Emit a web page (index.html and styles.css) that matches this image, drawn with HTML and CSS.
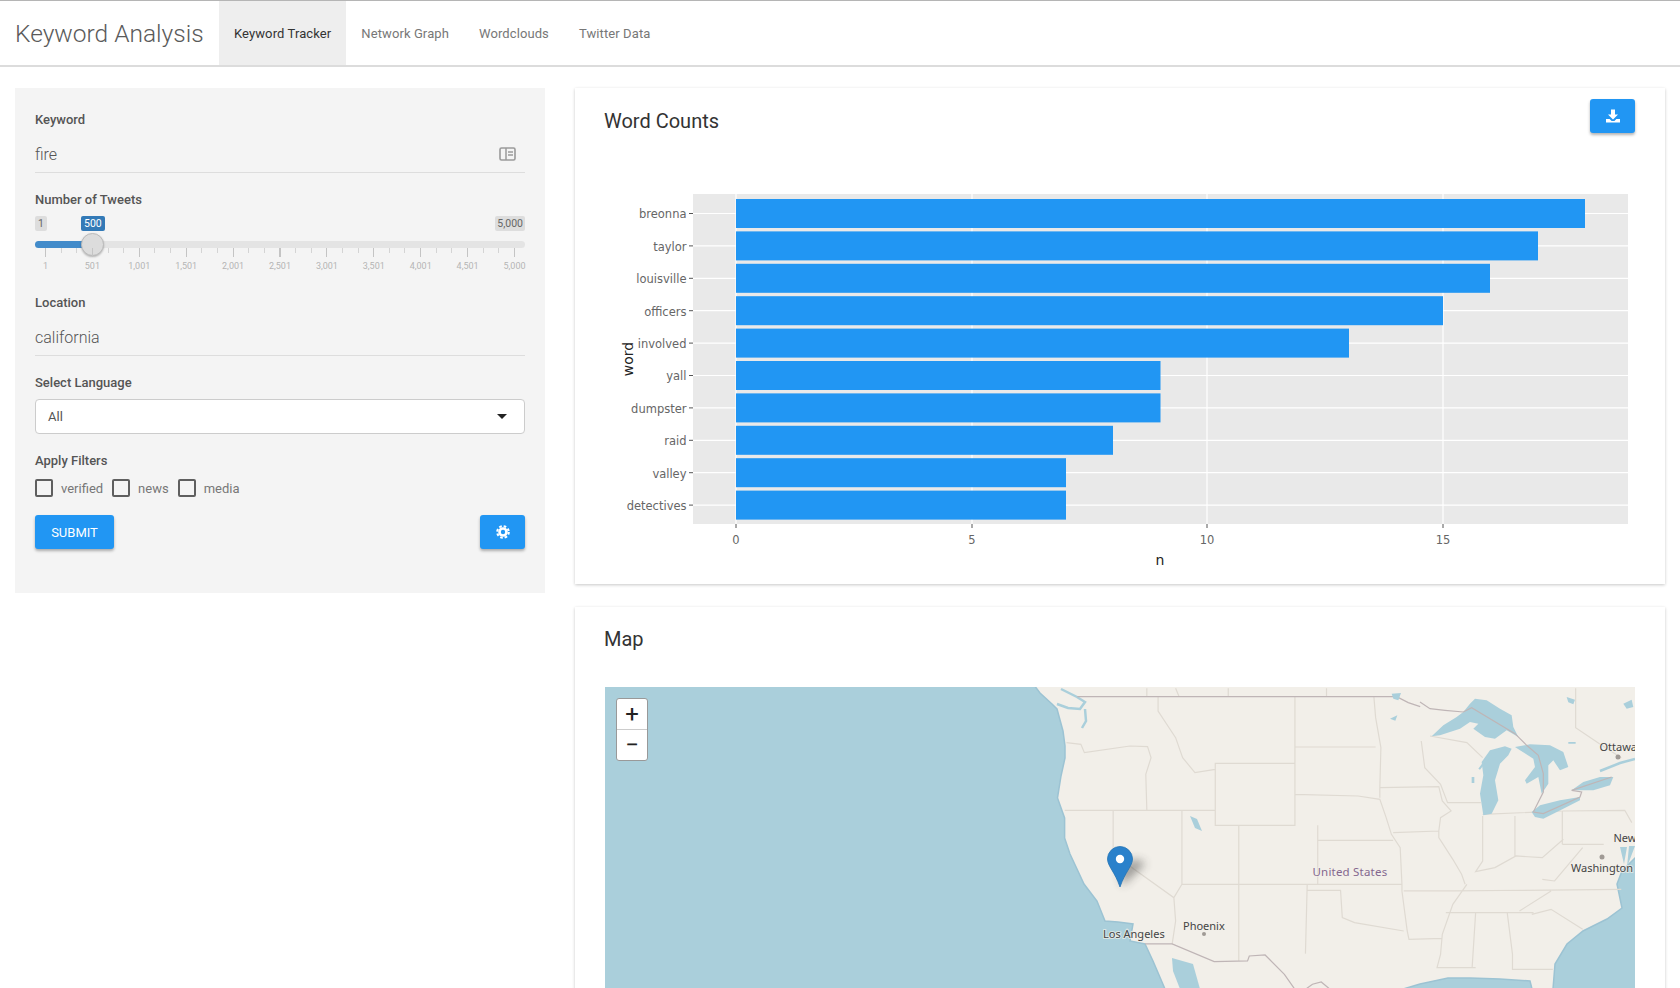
FILE: index.html
```html
<!DOCTYPE html>
<html lang="en">
<head>
  <meta charset="UTF-8">
  <meta name="viewport" content="width=device-width, initial-scale=1.0">
  <title>Keyword Analysis</title>
  <link rel="stylesheet" href="styles.css">
</head>
<body>
  <nav class="navbar">
    <span class="brand">Keyword Analysis</span>
    <a class="nav-tab active">Keyword Tracker</a>
    <a class="nav-tab">Network Graph</a>
    <a class="nav-tab">Wordclouds</a>
    <a class="nav-tab">Twitter Data</a>
  </nav>

  <div class="page">
    <aside class="sidebar">
      <div class="field">
        <label class="field-label">Keyword</label>
        <div class="text-input">
          <span>fire</span>
          <svg class="input-icon" viewBox="0 0 17 14" width="17" height="14">
            <rect x="1" y="1" width="15" height="12" rx="1.5" fill="none" stroke="#9a9a9a" stroke-width="1.6"/>
            <path d="M7 1v12M9 5h5M9 8h5" stroke="#9a9a9a" stroke-width="1.5" fill="none"/>
          </svg>
        </div>
      </div>

      <div class="field">
        <label class="field-label">Number of Tweets</label>
        <div class="slider">
          <span class="chip chip-min">1</span>
          <span class="chip chip-value">500</span>
          <span class="chip chip-max">5,000</span>
          <div class="track"><div class="track-fill"></div></div>
          <div class="handle"></div>
          <div class="ticks"></div>
          <div class="tick-labels">
            <span>1</span><span>501</span><span>1,001</span><span>1,501</span><span>2,001</span><span>2,501</span><span>3,001</span><span>3,501</span><span>4,001</span><span>4,501</span><span>5,000</span>
          </div>
        </div>
      </div>

      <div class="field">
        <label class="field-label">Location</label>
        <div class="text-input"><span>california</span></div>
      </div>

      <div class="field">
        <label class="field-label">Select Language</label>
        <div class="select-box">
          <span>All</span>
          <span class="caret"></span>
        </div>
      </div>

      <div class="field">
        <label class="field-label">Apply Filters</label>
        <div class="checks">
          <span class="check"><span class="check-box"></span>verified</span>
          <span class="check"><span class="check-box"></span>news</span>
          <span class="check"><span class="check-box"></span>media</span>
        </div>
      </div>

      <div class="actions">
        <button class="btn btn-submit">SUBMIT</button>
        <button class="btn btn-icon">
          <svg viewBox="0 0 16 16" width="14" height="14">
            <circle cx="8" cy="8" r="6.6" fill="none" stroke="#fff" stroke-width="2.4" stroke-dasharray="3 2.18"/>
            <circle cx="8" cy="8" r="4" fill="none" stroke="#fff" stroke-width="3"/>
          </svg>
        </button>
      </div>
    </aside>

    <main class="content">
      <section class="card card-chart">
        <div class="card-head">
          <h2 class="card-title">Word Counts</h2>
          <button class="btn btn-icon">
            <svg viewBox="0 0 14 14" width="14" height="14" fill="#fff">
              <path d="M5 .5h4v5h3l-5 5-5-5h3z"/>
              <path d="M0 10h3.6l2 2h2.8l2-2H14v3.6H0z"/>
            </svg>
          </button>
        </div>
        <!-- viewBox uses page coordinates -->
        <svg class="chart" viewBox="605 151 1030 425" width="1030" height="425">
          <rect x="693" y="194" width="935" height="330" fill="#e9e9e9"/>
          <g stroke="#fff" stroke-width="1.2">
            <path d="M736 194v330M972 194v330M1207 194v330M1443 194v330"/>
            <path d="M693 213.5h935M693 245.9h935M693 278.3h935M693 310.7h935M693 343.1h935M693 375.5h935M693 407.9h935M693 440.3h935M693 472.7h935M693 505.1h935"/>
          </g>
          <g fill="#2196f3">
            <rect x="736" y="199" width="849" height="29"/>
            <rect x="736" y="231.4" width="802" height="29"/>
            <rect x="736" y="263.8" width="754" height="29"/>
            <rect x="736" y="296.2" width="707" height="29"/>
            <rect x="736" y="328.6" width="613" height="29"/>
            <rect x="736" y="361" width="424.5" height="29"/>
            <rect x="736" y="393.4" width="424.5" height="29"/>
            <rect x="736" y="425.8" width="377" height="29"/>
            <rect x="736" y="458.2" width="330" height="29"/>
            <rect x="736" y="490.6" width="330" height="29"/>
          </g>
          <g class="axis-ticks">
            <path d="M689 213.5h4M689 245.9h4M689 278.3h4M689 310.7h4M689 343.1h4M689 375.5h4M689 407.9h4M689 440.3h4M689 472.7h4M689 505.1h4"/>
            <path d="M736 524v4M972 524v4M1207 524v4M1443 524v4"/>
          </g>
          <g class="axis-text" text-anchor="end">
            <text x="686.5" y="218.3">breonna</text>
            <text x="686.5" y="250.7">taylor</text>
            <text x="686.5" y="283.1">louisville</text>
            <text x="686.5" y="315.5">officers</text>
            <text x="686.5" y="347.9">involved</text>
            <text x="686.5" y="380.3">yall</text>
            <text x="686.5" y="412.7">dumpster</text>
            <text x="686.5" y="445.1">raid</text>
            <text x="686.5" y="477.5">valley</text>
            <text x="686.5" y="509.9">detectives</text>
          </g>
          <g class="axis-text" text-anchor="middle">
            <text x="736" y="544">0</text>
            <text x="972" y="544">5</text>
            <text x="1207" y="544">10</text>
            <text x="1443" y="544">15</text>
          </g>
          <text class="axis-title" x="1160" y="565" text-anchor="middle">n</text>
          <text class="axis-title" transform="translate(633 359) rotate(-90)" text-anchor="middle">word</text>
        </svg>
      </section>

      <section class="card card-map">
        <h2 class="card-title">Map</h2>
        <div class="map">
          <svg class="map-svg" viewBox="605 686 1030 320" width="1030" height="320">
            <defs>
              <filter id="pinBlur" x="-60%" y="-60%" width="220%" height="220%"><feGaussianBlur stdDeviation="5"/></filter>
            </defs>
            <rect x="605" y="686" width="1030" height="320" fill="#aacfdb"/>

            <!-- coast, page coordinates -->
            <path class="land" d="M1031 680L1040 692 1052 703 1057 708 1063 730 1065 745 1065 757 1061 775 1057.5 797 1064.6 817 1064.6 837 1070 853 1077 868 1084 883 1097 900 1105 920 1118 921 1133 923 1130 940 1145 943 1153 960 1165 988 1175 1010H1403V988L1420 983 1448 977 1470 977 1500 978 1530 980 1532 988V1010H1553V988L1555 963 1567 943 1583 930 1607 918 1622 907 1617 883 1622 870 1635 857H1640V680z"/>
            <path class="water" d="M1172 957L1193 963 1200 988 1180 988 1173 970z"/>
            <path class="channel" d="M1061 688L1077 696 1085 701 1080 708 1068 707 1057 703M1085 708L1086 720 1082 727"/>
            <path class="channel" d="M1600 770L1620 762 1635 758"/>
            <path class="water" d="M1620 846L1624 863 1627 846zM1629 845L1635 845 1627 866z"/>
            <path class="water" d="M1190 815L1197 818 1202 830 1195 827z"/>

            <!-- state lines, traced at 2.85 x 3 from x=1130 y=600 -->
            <g transform="translate(1130 600) scale(.3509 .3333)">
              <g class="borders">
                <path d="M1270 262L1270 380 1340 430 1400 470M130 262l10 25M280 262v25M560 262v25M48 262v25"/>
                <path d="M-181 425L-140 430-130 455 0 435 50 437 60 470 45 520 48 628M80 287v43l50 80 20 60 35 45 58-10M-186 628H243M243 487H470V673H243zM470 287V487M470 438H700M695 287l5 63 15 90-3 120v30M470 580l180 5 62 10 18 55 15 50 25 40 5 110M535 673v177M535 718H750M310 673V1080M148 628V850M-48 628V760L125 890 130 960 120 1030M148 850L125 890M148 850H775M505 850l-5 208M505 868H600L605 950 640 965 780 990M775 850V870L790 990 795 1015 890 1012M780 870H950M960 850L920 910 890 1000 885 1060 875 1100 985 1100M712 560L880 557 890 600 915 630 885 650 880 690 750 695M880 690v20L920 775 945 820 955 850M830 420l10 80 45 50 20 55H1000M855 405L960 425 1005 470M1005 645V780L985 812 1040 800 1100 765 1175 770 1235 715M1097 645V765M1005 640L1230 630M1232 630V730M1232 630L1410 628 1430 665M1232 730H1350M1175 835L1210 840 1290 740M925 870L1400 865M900 935H1150M1110 930L1200 870M1145 940L1200 925 1290 985M985 935L975 1100M1075 935L1090 1060V1105H1205"/>
              </g>
              <path class="intl" d="M-150 287H760L793 305 827 317"/>
              <path class="intl" d="M43 1029L120 1029 240 1082 335 1080 340 1065 385 1062 440 1120 480 1180 520 1150 545 1143 570 1165"/>
            </g>

            <!-- great lakes, traced at 3x from x=1420 y=686 -->
            <g transform="translate(1420 686) scale(.3333)">
              <g class="water">
                <path d="M35 148L70 115 110 90 130 75 150 50 165 35 200 40 240 65 275 85 280 120 295 150 260 130 225 155 195 150 160 125 175 110 150 105 120 125 90 135 60 145z"/>
                <path d="M190 385L180 320 190 265 185 225 210 190 255 178 275 185 265 205 240 230 225 280 235 340 215 380z"/>
                <path d="M285 180L330 172 390 175 430 195 445 240 420 250 400 220 385 235 385 290 365 320 355 270 320 290 315 280 345 240 340 215 300 190z"/>
                <path d="M335 375L360 355 420 340 480 330 480 340 430 365 370 395 345 390z"/>
                <path d="M455 310L490 285 540 270 580 270 570 295 520 310 480 310z"/>
                <path d="M175 245L205 205 210 210 180 248zM155 270h8v18h-8zM440 30l25 8-5 14-15-6zM610 50l25-12 5 22-20 5zM445 165h22v5h-22z"/>
                <path d="M-85 20l28-2-8 22-15-5zM-90 95l22-10-6 16z"/>
              </g>
              <path class="intl" d="M0 45L30 65 75 70 130 75 155 62 285 140 300 155 320 175 355 205 370 260 370 315 340 375 370 380 480 330 485 315 455 310 575 270"/>
            </g>

            <g class="map-label">
              <text x="1103" y="937">Los Angeles</text>
              <text x="1183" y="929">Phoenix</text>
              <text x="1599.5" y="750">Ottawa</text>
              <text x="1613.5" y="841">New York</text>
              <text x="1571" y="871">Washington</text>
              <text class="map-country" x="1312.5" y="875">United States</text>
            </g>
            <g fill="#a09a95">
              <circle cx="1204" cy="933" r="2"/>
              <circle cx="1618" cy="756" r="2.5"/>
              <circle cx="1602" cy="856" r="2.5"/>
            </g>

            <path class="pin-shadow" d="M1122 885L1146 862 1134 858 1120 868z" filter="url(#pinBlur)"/>
            <path d="M1120 886C1115 871 1107.5 865 1107.5 858A12.5 12.5 0 0 1 1132.5 858C1132.5 865 1125 871 1120 886z" fill="#2a81cb" stroke="#2473b4" stroke-width=".8"/>
            <circle cx="1120" cy="858" r="4.2" fill="#fff"/>
          </svg>
          <div class="zoom-control">
            <span class="zoom-btn">+</span>
            <span class="zoom-btn">−</span>
          </div>
        </div>
      </section>
    </main>
  </div>
</body>
</html>
```

FILE: styles.css
```css
html {
  overflow: hidden;
}

body {
  margin: 0;
  background-color: #fff;
  font-family: 'Roboto', 'Liberation Sans', sans-serif;
  color: #555;
}

.navbar {
  display: flex;
  align-items: stretch;
  height: 64px;
  border-top: 1px solid #b5b5b5;
  border-bottom: 2px solid #dcdcdc;
}

.brand {
  display: flex;
  align-items: center;
  width: 219px;
  padding-left: 15px;
  box-sizing: border-box;
  font-size: 24.5px;
  font-weight: 300;
  color: #5a5a5a;
}

.nav-tab {
  display: flex;
  align-items: center;
  padding: 0 15px;
  font-size: 13px;
  letter-spacing: 0.1px;
  color: #777;
}

.nav-tab.active {
  background-color: #eee;
  color: #333;
}

.page {
  display: flex;
  align-items: flex-start;
}

.sidebar {
  box-sizing: border-box;
  width: 530px;
  height: 505px;
  margin: 21px 30px 0 15px;
  padding: 23px 20px 0;
  background-color: #f4f4f4;
}

.field {
  margin-bottom: 18px;
}

.field-label {
  display: block;
  font-size: 13px;
  font-weight: 500;
  line-height: 18px;
  color: #555;
}

.text-input {
  display: flex;
  align-items: center;
  justify-content: space-between;
  height: 36px;
  padding-top: 7px;
  border-bottom: 1px solid #ddd;
  font-size: 16px;
  font-weight: 300;
  color: #555;
}

.input-icon {
  margin-right: 9px;
}

.slider {
  position: relative;
  height: 67px;
}

.chip {
  position: absolute;
  top: 7px;
  height: 15px;
  padding: 0 2px;
  border-radius: 2px;
  background-color: #ddd;
  font-size: 10.5px;
  line-height: 15px;
  color: #666;
}

.chip-min {
  left: 0;
  padding: 0 3px;
}

.chip-value {
  left: 46px;
  padding: 0 3px;
  background-color: #337ab7;
  color: #fff;
}

.chip-max {
  right: 0;
}

.track {
  position: absolute;
  top: 32px;
  left: 0;
  right: 0;
  height: 7px;
  border-radius: 4px;
  background-color: #e4e4e4;
}

.track-fill {
  width: 57px;
  height: 100%;
  border-radius: 4px 0 0 4px;
  background-color: #428bca;
}

.handle {
  position: absolute;
  top: 24px;
  left: 46px;
  box-sizing: border-box;
  width: 23px;
  height: 23px;
  border: 1px solid #bbb;
  border-radius: 50%;
  background-color: #dcdcdc;
  box-shadow: 0 1px 2px rgba(0, 0, 0, 0.25);
}

.ticks {
  position: absolute;
  top: 39px;
  left: 10px;
  width: 470px;
  height: 10px;
  background-image:
    repeating-linear-gradient(to right, #c4c4c4 0 1px, transparent 1px 46.9px),
    repeating-linear-gradient(to right, #d4d4d4 0 1px, transparent 1px 15.63px);
  background-size: 100% 9px, 100% 5px;
  background-repeat: no-repeat;
}

.tick-labels {
  position: absolute;
  top: 50px;
  left: -13px;
  display: flex;
  width: 516px;
}

.tick-labels span {
  flex: 1;
  font-size: 9px;
  line-height: 14px;
  text-align: center;
  color: #b4b4b4;
}

.select-box {
  display: flex;
  align-items: center;
  justify-content: space-between;
  box-sizing: border-box;
  height: 35px;
  margin-top: 7px;
  padding: 0 17px 0 12px;
  border: 1px solid #ccc;
  border-radius: 4px;
  background-color: #fff;
  font-size: 13px;
  color: #555;
}

.caret {
  width: 0;
  height: 0;
  border-top: 5px solid #222;
  border-left: 5px solid transparent;
  border-right: 5px solid transparent;
}

.checks {
  display: flex;
  gap: 9px;
  margin-top: 9px;
}

.check {
  display: flex;
  align-items: center;
  gap: 8px;
  font-size: 13px;
  color: #777;
}

.check-box {
  box-sizing: border-box;
  width: 18px;
  height: 18px;
  border: 2px solid #5f5f5f;
  border-radius: 2px;
}

.actions {
  display: flex;
  justify-content: space-between;
}

.btn {
  display: flex;
  align-items: center;
  justify-content: center;
  height: 34px;
  padding: 0;
  border: none;
  border-radius: 3px;
  background-color: #2196f3;
  box-shadow: 0 2px 3px rgba(0, 0, 0, 0.3);
  font-family: inherit;
  color: #fff;
}

.btn-submit {
  width: 79px;
  font-size: 13px;
}

.btn-icon {
  width: 45px;
}

.content {
  width: 1090px;
  margin-top: 21px;
}

.card {
  box-sizing: border-box;
  background-color: #fff;
  box-shadow: 0 1px 3px rgba(0, 0, 0, 0.22);
}

.card-chart {
  height: 496px;
  margin-bottom: 23px;
  padding: 11px 30px 0;
}

.card-head {
  display: flex;
  align-items: flex-start;
  justify-content: space-between;
  height: 52px;
}

.card-title {
  margin: 0 0 0 -1px;
  padding-top: 9px;
  font-size: 20px;
  font-weight: 400;
  line-height: 26px;
  color: #333;
}

.chart {
  display: block;
}

.axis-ticks path {
  stroke: #555;
  stroke-width: 1;
  fill: none;
}

.axis-text {
  font-family: 'DejaVu Sans', sans-serif;
  font-size: 11.5px;
  fill: #666;
}

.axis-title {
  font-family: 'DejaVu Sans', sans-serif;
  font-size: 14px;
  fill: #222;
}

.card-map {
  padding: 10px 30px 0;
}

.map {
  position: relative;
  height: 320px;
  margin-top: 35px;
  overflow: hidden;
}

.map-svg {
  display: block;
}

.land {
  fill: #f2efe9;
  stroke: #9cc3d3;
  stroke-width: 1.5;
}

.water,
.water path {
  fill: #aacfdb;
}

.channel {
  fill: none;
  stroke: #aacfdb;
  stroke-width: 2.5;
}

.borders path {
  fill: none;
  stroke: #dfdad2;
  stroke-width: 1.2;
  vector-effect: non-scaling-stroke;
}

.intl {
  fill: none;
  stroke: #bfb5b6;
  stroke-width: 1.2;
  vector-effect: non-scaling-stroke;
}

.map-label text {
  font-family: 'Noto Sans', sans-serif;
  font-size: 11px;
  fill: #444;
  paint-order: stroke;
  stroke: rgba(242, 239, 233, 0.7);
  stroke-width: 2px;
}

.map-label .map-country {
  font-size: 11.5px;
  fill: #84678f;
  letter-spacing: 0.2px;
}

.pin-shadow {
  fill: #333;
  opacity: 0.45;
}

.zoom-control {
  position: absolute;
  top: 11px;
  left: 11px;
  width: 30px;
  border: 1px solid #999;
  border-radius: 3px;
  background-color: #fff;
}

.zoom-btn {
  display: block;
  height: 30px;
  font-size: 24px;
  line-height: 30px;
  text-align: center;
  color: #222;
}

.zoom-btn + .zoom-btn {
  border-top: 1px solid #ccc;
}
```
